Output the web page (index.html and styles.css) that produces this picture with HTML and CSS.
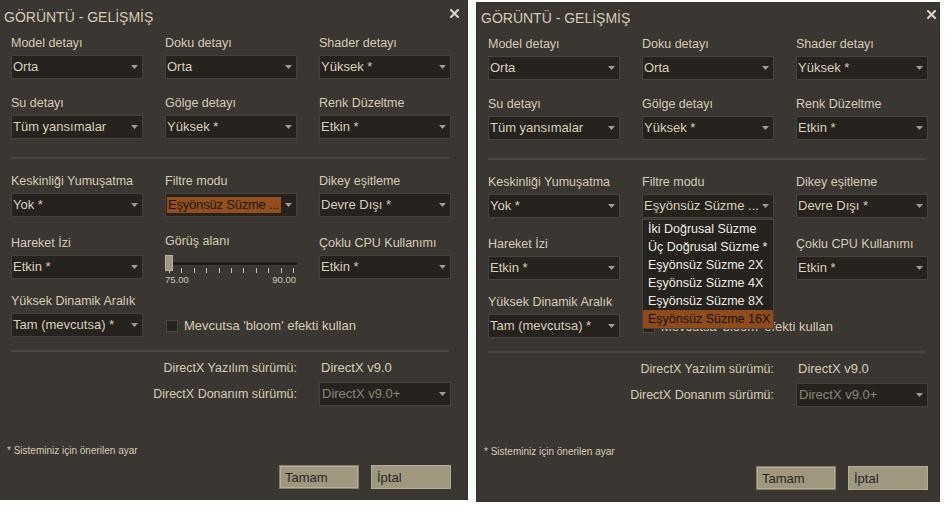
FILE: index.html
```html
<!DOCTYPE html>
<html lang="tr">
<head>
<meta charset="utf-8">
<title>Görüntü - Gelişmiş</title>
<link rel="stylesheet" href="styles.css">
</head>
<body>
<div class="screens">
  <section class="panel">
    <header class="head">
      <h1 class="title">GÖRÜNTÜ - GELİŞMİŞ</h1>
      <svg class="close" viewBox="0 0 9 9"><path d="M1 1 L8 8 M8 1 L1 8" stroke="#d9d1c1" stroke-width="2.2" stroke-linecap="square" fill="none"/></svg>
    </header>
    <div class="grid top">
      <div class="field"><span class="label">Model detayı</span><div class="select"><span class="value">Orta</span><svg class="arrow" viewBox="0 0 7 4"><polygon points="0,0 7,0 3.5,4" fill="#a59d8b"/></svg></div></div>
      <div class="field"><span class="label">Doku detayı</span><div class="select"><span class="value">Orta</span><svg class="arrow" viewBox="0 0 7 4"><polygon points="0,0 7,0 3.5,4" fill="#a59d8b"/></svg></div></div>
      <div class="field"><span class="label">Shader detayı</span><div class="select"><span class="value">Yüksek *</span><svg class="arrow" viewBox="0 0 7 4"><polygon points="0,0 7,0 3.5,4" fill="#a59d8b"/></svg></div></div>
      <div class="field"><span class="label">Su detayı</span><div class="select"><span class="value">Tüm yansımalar</span><svg class="arrow" viewBox="0 0 7 4"><polygon points="0,0 7,0 3.5,4" fill="#a59d8b"/></svg></div></div>
      <div class="field"><span class="label">Gölge detayı</span><div class="select"><span class="value">Yüksek *</span><svg class="arrow" viewBox="0 0 7 4"><polygon points="0,0 7,0 3.5,4" fill="#a59d8b"/></svg></div></div>
      <div class="field"><span class="label">Renk Düzeltme</span><div class="select"><span class="value">Etkin *</span><svg class="arrow" viewBox="0 0 7 4"><polygon points="0,0 7,0 3.5,4" fill="#a59d8b"/></svg></div></div>
    </div>
    <hr class="sep">
    <div class="grid mid">
      <div class="field"><span class="label">Keskinliği Yumuşatma</span><div class="select"><span class="value">Yok *</span><svg class="arrow" viewBox="0 0 7 4"><polygon points="0,0 7,0 3.5,4" fill="#a59d8b"/></svg></div></div>
      <div class="field"><span class="label">Filtre modu</span><div class="select"><span class="value hl">Eşyönsüz Süzme ...</span><svg class="arrow" viewBox="0 0 7 4"><polygon points="0,0 7,0 3.5,4" fill="#a59d8b"/></svg></div></div>
      <div class="field"><span class="label">Dikey eşitleme</span><div class="select"><span class="value">Devre Dışı *</span><svg class="arrow" viewBox="0 0 7 4"><polygon points="0,0 7,0 3.5,4" fill="#a59d8b"/></svg></div></div>
      <div class="field"><span class="label">Hareket İzi</span><div class="select"><span class="value">Etkin *</span><svg class="arrow" viewBox="0 0 7 4"><polygon points="0,0 7,0 3.5,4" fill="#a59d8b"/></svg></div></div>
      <div class="field slider-field"><span class="label">Görüş alanı</span>
        <div class="slider">
          <div class="track"></div>
          <div class="ticks"><i></i><i></i><i></i><i></i><i></i><i></i><i></i><i></i><i></i><i></i><i></i></div>
          <div class="scale"><span>75.00</span><span>90.00</span></div>
          <div class="thumb"></div>
        </div>
      </div>
      <div class="field"><span class="label">Çoklu CPU Kullanımı</span><div class="select"><span class="value">Etkin *</span><svg class="arrow" viewBox="0 0 7 4"><polygon points="0,0 7,0 3.5,4" fill="#a59d8b"/></svg></div></div>
      <div class="field"><span class="label">Yüksek Dinamik Aralık</span><div class="select"><span class="value">Tam (mevcutsa) *</span><svg class="arrow" viewBox="0 0 7 4"><polygon points="0,0 7,0 3.5,4" fill="#a59d8b"/></svg></div></div>
      <div class="field check-field"><div class="check"><span class="box"></span><span class="check-text">Mevcutsa 'bloom' efekti kullan</span></div></div>
    </div>
    <hr class="sep second">
    <div class="dx">
      <span class="dx-label">DirectX Yazılım sürümü:</span><span class="dx-value">DirectX v9.0</span>
      <span class="dx-label">DirectX Donanım sürümü:</span><div class="select disabled"><span class="value">DirectX v9.0+</span><svg class="arrow" viewBox="0 0 7 4"><polygon points="0,0 7,0 3.5,4" fill="#a59d8b"/></svg></div>
    </div>
    <p class="note">* Sisteminiz için önerilen ayar</p>
    <div class="actions"><button class="btn default">Tamam</button><button class="btn">İptal</button></div>
  </section>

  <section class="panel alt">
    <header class="head">
      <h1 class="title">GÖRÜNTÜ - GELİŞMİŞ</h1>
      <svg class="close" viewBox="0 0 9 9"><path d="M1 1 L8 8 M8 1 L1 8" stroke="#d9d1c1" stroke-width="2.2" stroke-linecap="square" fill="none"/></svg>
    </header>
    <div class="grid top">
      <div class="field"><span class="label">Model detayı</span><div class="select"><span class="value">Orta</span><svg class="arrow" viewBox="0 0 7 4"><polygon points="0,0 7,0 3.5,4" fill="#a59d8b"/></svg></div></div>
      <div class="field"><span class="label">Doku detayı</span><div class="select"><span class="value">Orta</span><svg class="arrow" viewBox="0 0 7 4"><polygon points="0,0 7,0 3.5,4" fill="#a59d8b"/></svg></div></div>
      <div class="field"><span class="label">Shader detayı</span><div class="select"><span class="value">Yüksek *</span><svg class="arrow" viewBox="0 0 7 4"><polygon points="0,0 7,0 3.5,4" fill="#a59d8b"/></svg></div></div>
      <div class="field"><span class="label">Su detayı</span><div class="select"><span class="value">Tüm yansımalar</span><svg class="arrow" viewBox="0 0 7 4"><polygon points="0,0 7,0 3.5,4" fill="#a59d8b"/></svg></div></div>
      <div class="field"><span class="label">Gölge detayı</span><div class="select"><span class="value">Yüksek *</span><svg class="arrow" viewBox="0 0 7 4"><polygon points="0,0 7,0 3.5,4" fill="#a59d8b"/></svg></div></div>
      <div class="field"><span class="label">Renk Düzeltme</span><div class="select"><span class="value">Etkin *</span><svg class="arrow" viewBox="0 0 7 4"><polygon points="0,0 7,0 3.5,4" fill="#a59d8b"/></svg></div></div>
    </div>
    <hr class="sep">
    <div class="grid mid">
      <div class="field"><span class="label">Keskinliği Yumuşatma</span><div class="select"><span class="value">Yok *</span><svg class="arrow" viewBox="0 0 7 4"><polygon points="0,0 7,0 3.5,4" fill="#a59d8b"/></svg></div></div>
      <div class="field"><span class="label">Filtre modu</span><div class="select open"><span class="value">Eşyönsüz Süzme ...</span><svg class="arrow" viewBox="0 0 7 4"><polygon points="0,0 7,0 3.5,4" fill="#a59d8b"/></svg>
          <ul class="menu">
            <li class="menu-item">İki Doğrusal Süzme</li>
            <li class="menu-item">Üç Doğrusal Süzme *</li>
            <li class="menu-item">Eşyönsüz Süzme 2X</li>
            <li class="menu-item">Eşyönsüz Süzme 4X</li>
            <li class="menu-item">Eşyönsüz Süzme 8X</li>
            <li class="menu-item hl">Eşyönsüz Süzme 16X</li>
          </ul>
        </div></div>
      <div class="field"><span class="label">Dikey eşitleme</span><div class="select"><span class="value">Devre Dışı *</span><svg class="arrow" viewBox="0 0 7 4"><polygon points="0,0 7,0 3.5,4" fill="#a59d8b"/></svg></div></div>
      <div class="field"><span class="label">Hareket İzi</span><div class="select"><span class="value">Etkin *</span><svg class="arrow" viewBox="0 0 7 4"><polygon points="0,0 7,0 3.5,4" fill="#a59d8b"/></svg></div></div>
      <div class="field slider-field covered"><span class="label">Görüş alanı</span>
        <div class="slider">
          <div class="track"></div>
          <div class="ticks"><i></i><i></i><i></i><i></i><i></i><i></i><i></i><i></i><i></i><i></i><i></i></div>
          <div class="scale"><span>75.00</span><span>90.00</span></div>
          <div class="thumb"></div>
        </div>
      </div>
      <div class="field"><span class="label">Çoklu CPU Kullanımı</span><div class="select"><span class="value">Etkin *</span><svg class="arrow" viewBox="0 0 7 4"><polygon points="0,0 7,0 3.5,4" fill="#a59d8b"/></svg></div></div>
      <div class="field"><span class="label">Yüksek Dinamik Aralık</span><div class="select"><span class="value">Tam (mevcutsa) *</span><svg class="arrow" viewBox="0 0 7 4"><polygon points="0,0 7,0 3.5,4" fill="#a59d8b"/></svg></div></div>
      <div class="field check-field"><div class="check"><span class="box"></span><span class="check-text">Mevcutsa 'bloom' efekti kullan</span></div></div>
    </div>
    <hr class="sep second">
    <div class="dx">
      <span class="dx-label">DirectX Yazılım sürümü:</span><span class="dx-value">DirectX v9.0</span>
      <span class="dx-label">DirectX Donanım sürümü:</span><div class="select disabled"><span class="value">DirectX v9.0+</span><svg class="arrow" viewBox="0 0 7 4"><polygon points="0,0 7,0 3.5,4" fill="#a59d8b"/></svg></div>
    </div>
    <p class="note">* Sisteminiz için önerilen ayar</p>
    <div class="actions"><button class="btn default">Tamam</button><button class="btn">İptal</button></div>
  </section>
</div>
</body>
</html>
```

FILE: styles.css
```css
* { box-sizing: border-box; }
html, body { margin: 0; padding: 0; }
body {
  background: #ffffff;
  font-family: "Liberation Sans", Arial, sans-serif;
  color: #d6ccb4;
}
.screens {
  display: flex;
  align-items: flex-start;
  gap: 8px;
  width: 952px;
  height: 512px;
  overflow: hidden;
}
.panel {
  flex: none;
  width: 468px;
  height: 500px;
  background: #3a3632;
  padding-left: 11px;
  display: flex;
  flex-direction: column;
  overflow: hidden;
}
.panel.alt {
  width: 464px;
  margin-top: 2px;
  padding-left: 12px;
}
.head {
  flex: none;
  display: flex;
  justify-content: space-between;
  align-items: flex-start;
  width: 455px;
  margin-left: -7px;
  padding-top: 8px;
  height: 26px;
}
.panel.alt .head { padding-top: 7px; height: 25px; }
.title {
  margin: 0;
  font-size: 14px;
  font-weight: normal;
  line-height: 18px;
  color: #d6ccb4;
  white-space: nowrap;
}
.close { width: 9px; height: 9px; margin-top: 1px; flex: none; }

.grid {
  flex: none;
  display: grid;
  grid-template-columns: repeat(3, 132px);
  column-gap: 22px;
  row-gap: 16px;
}
.grid.top { margin-top: 9px; grid-template-rows: 44px 44px; }
.grid.mid { grid-template-rows: 44px 46px 42px; }
.field { display: flex; flex-direction: column; justify-content: flex-end; }
.slider-field { justify-content: flex-start; }
.covered { visibility: hidden; }
.label {
  font-size: 12.5px;
  line-height: 16px;
  margin-bottom: 4px;
  white-space: nowrap;
  color: #d6ccb4;
}
.select {
  flex: none;
  position: relative;
  height: 24px;
  background: #26231f;
  border: 1px solid #47433b;
  display: flex;
  align-items: center;
  padding-left: 1px;
}
.select.open { z-index: 3; }
.value {
  font-size: 13px;
  line-height: 16px;
  padding: 0 2px 0 0;
  white-space: nowrap;
  color: #d8cfb8;
}
.value.hl { background: #924f1d; color: #1c1712; padding-left: 1px; letter-spacing: -0.2px; }
.select.disabled .value { color: #8b8373; padding-left: 1px; }
.arrow { margin-left: auto; margin-right: 4px; width: 7px; height: 4px; flex: none; }

.sep {
  flex: none;
  display: block;
  height: 2px;
  width: 438px;
  background: #4b473f;
  border: 0;
  margin: 18px 0 14px;
}
.sep.second { margin: 13px 0 8px; }

.slider { position: relative; height: 24px; padding-top: 9px; }
.track {
  height: 3px;
  background: #1f1c19;
  box-shadow: 0 0 0 1px #423e37;
}
.ticks {
  display: flex;
  justify-content: space-between;
  height: 5px;
  margin-top: 3px;
  padding: 0 3px 0 4px;
}
.ticks i { display: block; width: 1px; background: #c8bfa8; }
.scale {
  display: flex;
  justify-content: space-between;
  font-size: 9.5px;
  line-height: 11px;
  margin-top: 1px;
  padding-right: 1px;
  color: #d0c7b0;
}
.thumb {
  position: absolute;
  left: 0;
  top: 2px;
  width: 8px;
  height: 16px;
  background: #9f9783;
  border: 1px solid #bab29e;
}

.check-field { justify-content: flex-end; }
.check {
  flex: none;
  display: flex;
  align-items: center;
  height: 24px;
  gap: 6px;
  padding-left: 1px;
  padding-top: 1px;
}
.box {
  flex: none;
  width: 12px;
  height: 12px;
  background: #26231f;
  border: 1px solid #4d4840;
}
.check-text { font-size: 13px; line-height: 16px; white-space: nowrap; color: #d6ccb4; }

.dx {
  flex: none;
  display: grid;
  grid-template-columns: 286px 132px;
  column-gap: 22px;
  row-gap: 6px;
  align-items: center;
}
.dx-label {
  font-size: 12.5px;
  line-height: 16px;
  text-align: right;
  white-space: nowrap;
  color: #d6ccb4;
}
.dx-value { font-size: 13px; line-height: 16px; padding-left: 2px; color: #d8cfb8; white-space: nowrap; }

.note {
  flex: none;
  margin: 39px 0 0 -4px;
  font-size: 10px;
  line-height: 12px;
  color: #d6ccb4;
  white-space: nowrap;
}
.actions {
  flex: none;
  display: flex;
  justify-content: flex-end;
  gap: 12px;
  width: 440px;
  margin-top: 8px;
}
.btn {
  width: 80px;
  height: 24px;
  background: #a0977f;
  border: 1px solid #b3ab96;
  color: #2a2620;
  font-family: "Liberation Sans", Arial, sans-serif;
  font-size: 13px;
  text-align: left;
  padding: 0 0 0 5px;
  margin: 0;
}
.btn.default { border-color: #878069; box-shadow: inset 0 0 0 1px #b7af9a; }

.menu {
  position: absolute;
  left: -1px;
  top: calc(100% + 2px);
  width: 132px;
  margin: 0;
  padding: 0;
  list-style: none;
  background: #26231f;
  border: 1px solid #47433b;
  z-index: 2;
}
.menu-item {
  font-size: 12.5px;
  line-height: 18px;
  padding-left: 5px;
  color: #f0ece4;
  white-space: nowrap;
}
.menu-item.hl { background: #8f4c1a; color: #17120d; }
```
